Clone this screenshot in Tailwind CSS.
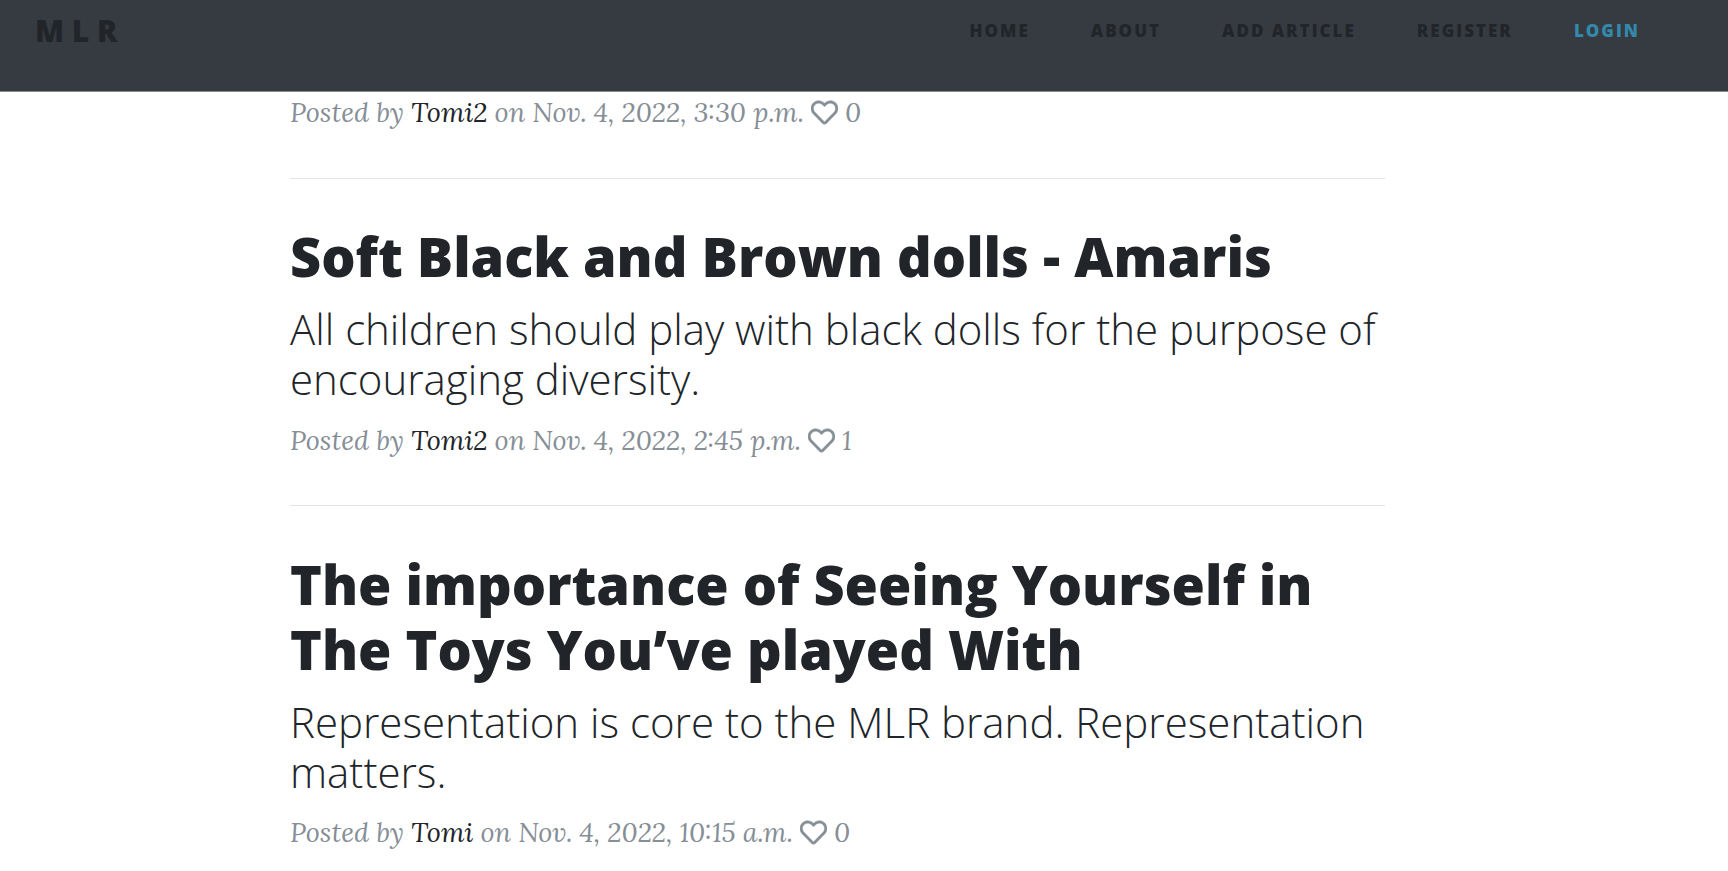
<!DOCTYPE html>
<html lang="en">
<head>
<meta charset="utf-8">
<meta name="viewport" content="width=device-width, initial-scale=1">
<title>MLR</title>
<script src="https://cdn.jsdelivr.net/npm/@tailwindcss/browser@4"></script>
</head>
<body class="bg-white font-['Open_Sans',sans-serif] text-[#212529]">
<svg class="hidden" aria-hidden="true">
  <symbol id="heart" viewBox="0 0 512 512"><path fill="currentColor" stroke="currentColor" stroke-width="8" d="M458.4 64.3C400.6 15.7 311.3 23 256 79.3 200.7 23 111.4 15.6 53.6 64.3-21.6 127.6-10.6 230.8 43 285.5l175.4 178.7c10 10.2 23.4 15.9 37.6 15.9 14.3 0 27.6-5.6 37.6-15.8L469 285.6c53.5-54.7 64.7-157.9-10.6-221.3zm-23.6 187.5L259.4 430.5c-2.4 2.4-4.4 2.4-6.8 0L77.2 251.8c-36.5-37.2-43.9-107.6 7.3-150.7 38.9-32.7 98.9-27.8 136.5 10.5l35 35.7 35-35.7c37.8-38.5 97.8-43.2 136.5-10.6 51.1 43.1 43.5 113.9 7.3 150.8z"/></symbol>
</svg>
<header class="sticky top-0 z-10 flex h-[92px] items-start justify-between border-b border-[#868e96] bg-[#363a41] pr-[88px] pl-[35px] font-extrabold">
  <a href="#" class="pt-[10px] text-[30px] leading-[42px]">M L R</a>
  <nav class="flex gap-[61px] pt-[17px] text-[17px] leading-[27px] tracking-[2px]">
    <a href="#">HOME</a>
    <a href="#">ABOUT</a>
    <a href="#">ADD ARTICLE</a>
    <a href="#">REGISTER</a>
    <a href="#" class="text-[#3489aa]">LOGIN</a>
  </nav>
</header>
<main class="pr-[53px]">
  <div class="mx-auto max-w-[1095px]">
    <article class="pb-[46px]">
      <p class="flex items-center gap-[7px] font-['Lora','Liberation_Serif',serif] text-[27px] leading-[40px] text-[#868e96] italic"><span>Posted by <a href="#" class="text-[#212529]">Tomi2</a> on Nov. 4, 2022, 3:30 p.m.</span><svg class="size-[27px]" role="img" aria-label="Likes"><use href="#heart"/></svg><span>0</span></p>
    </article>
    <hr class="border-black/10">
    <article class="py-[45px]">
      <a href="#" class="block">
        <h2 class="text-[54px] leading-[65px] font-extrabold">Soft Black and Brown dolls - Amaris</h2>
        <h3 class="mt-[15px] text-[42px] leading-[50px] font-light">All children should play with black dolls for the purpose of encouraging diversity.</h3>
      </a>
      <p class="mt-4 flex items-center gap-[7px] font-['Lora','Liberation_Serif',serif] text-[27px] leading-[40px] text-[#868e96] italic"><span>Posted by <a href="#" class="text-[#212529]">Tomi2</a> on Nov. 4, 2022, 2:45 p.m.</span><svg class="size-[27px]" role="img" aria-label="Likes"><use href="#heart"/></svg><span>1</span></p>
    </article>
    <hr class="border-black/10">
    <article class="pt-[46px]">
      <a href="#" class="block">
        <h2 class="text-[54px] leading-[65px] font-extrabold">The importance of Seeing Yourself in The Toys You’ve played With</h2>
        <h3 class="mt-[15px] text-[42px] leading-[50px] font-light">Representation is core to the MLR brand. Representation matters.</h3>
      </a>
      <p class="mt-[15px] flex items-center gap-[7px] font-['Lora','Liberation_Serif',serif] text-[27px] leading-[40px] text-[#868e96] italic"><span>Posted by <a href="#" class="text-[#212529]">Tomi</a> on Nov. 4, 2022, 10:15 a.m.</span><svg class="size-[27px]" role="img" aria-label="Likes"><use href="#heart"/></svg><span>0</span></p>
    </article>
  </div>
</main>
</body>
</html>
